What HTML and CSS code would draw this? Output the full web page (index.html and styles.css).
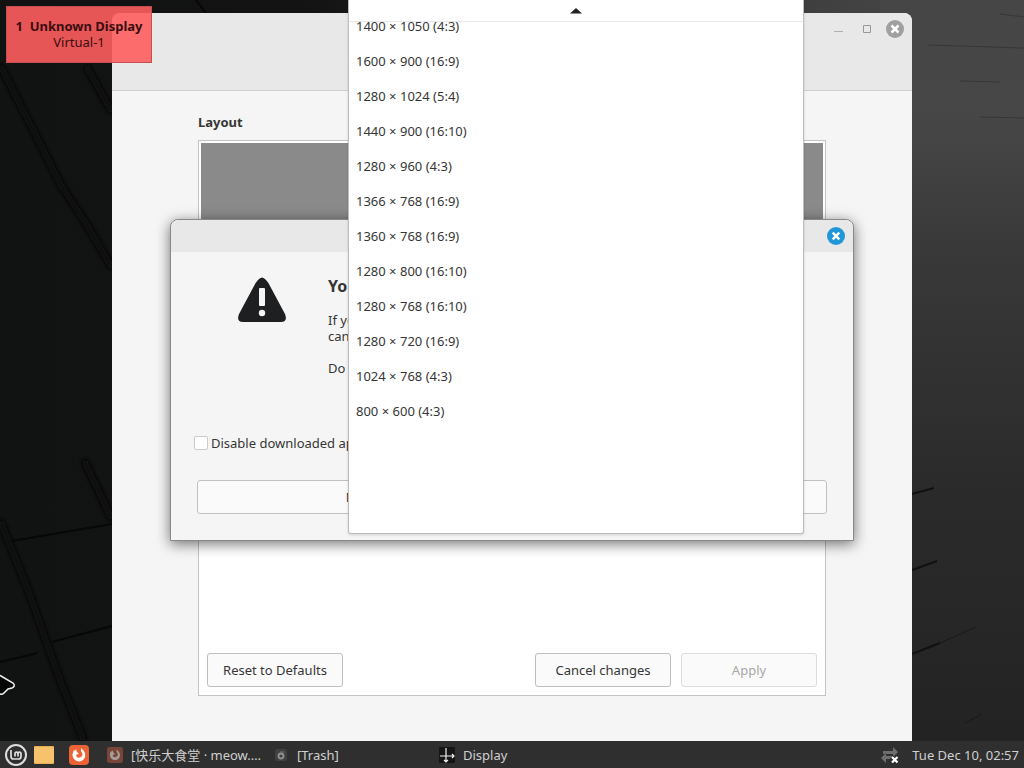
FILE: index.html
```html
<!DOCTYPE html>
<html lang="en">
<head>
    <meta charset="UTF-8">
    <meta name="viewport" content="width=device-width, initial-scale=1.0">
    <title>Display</title>
    <link rel="stylesheet" href="styles.css">
</head>
<body>
    <main class="desktop">
        <svg class="wallpaper" viewBox="0 0 1024 741" preserveAspectRatio="none" aria-hidden="true">
            <defs>
                <linearGradient id="sky" x1="0" y1="0" x2="1" y2="0">
                    <stop offset="0" stop-color="#111212"/>
                    <stop offset="0.3" stop-color="#131313"/>
                    <stop offset="0.8" stop-color="#404040"/>
                    <stop offset="1" stop-color="#4a4a4a"/>
                </linearGradient>
                <linearGradient id="side" x1="0" y1="0" x2="0" y2="1">
                    <stop offset="0" stop-color="#464646"/>
                    <stop offset="0.15" stop-color="#474747"/>
                    <stop offset="0.35" stop-color="#383838"/>
                    <stop offset="0.65" stop-color="#2b2b2b"/>
                    <stop offset="1" stop-color="#232323"/>
                </linearGradient>
                <filter id="soft"><feGaussianBlur stdDeviation="2"/></filter>
            </defs>
            <rect width="1024" height="741" fill="url(#sky)"/>
            <rect x="880" width="144" height="741" fill="url(#side)"/>
            <g fill="none" stroke="#070707" stroke-width="7" filter="url(#soft)">
                <path d="M0 65L28 120L62 187L84 220L112 268"/>
                <path d="M86 66L112 112"/>
                <path d="M84 460L112 520"/>
                <path d="M0 520L28 590L60 680L84 741"/>
            </g>
            <g fill="none" stroke="#070707" stroke-width="2">
                <path d="M12 541L112 524M52 642L112 626M0 662L38 653M196 0L206 13"/>
            </g>
            <g fill="none" stroke="#111" stroke-width="2">
                <path d="M912 494L934 488M912 570L937 561M912 654L940 643"/>
            </g>
            <g fill="none" stroke="#1a1a1a" stroke-width="1">
                <path d="M940 643L976 627M965 723L982 714"/>
            </g>
            <g fill="none" stroke="#363636" stroke-width="1">
                <path d="M928 45L1024 48M980 117L1024 118M960 81L1000 82M1000 14L1024 17"/>
            </g>
        </svg>

        <section class="window" aria-label="Display">
            <header class="window-header">
                <button class="icon-btn" aria-label="Minimize">
                    <svg width="18" height="18" viewBox="0 0 18 18"><path d="M4 11.500h9" stroke="#b0b0b0"/></svg>
                </button>
                <button class="icon-btn" aria-label="Maximize">
                    <svg width="18" height="18" viewBox="0 0 18 18"><path d="M5.500 5.500h7v7h-7z" fill="none" stroke="#999"/></svg>
                </button>
                <button class="icon-btn" aria-label="Close window">
                    <svg width="18" height="18" viewBox="0 0 18 18"><circle cx="9" cy="9" r="9" fill="#a0a0a0"/><path d="M5.500 5.500l7 7M12.500 5.500l-7 7" stroke="#fff" stroke-width="2.500"/></svg>
                </button>
            </header>
            <div class="window-body">
                <h2 class="section-title">Layout</h2>
                <div class="frame">
                    <div class="preview"></div>
                    <div class="actions">
                        <button class="btn btn-reset">Reset to Defaults</button>
                        <button class="btn">Cancel changes</button>
                        <button class="btn" disabled>Apply</button>
                    </div>
                </div>
            </div>
        </section>

        <section class="dialog" role="dialog" aria-label="Question">
            <header class="dialog-header">
                <button class="icon-btn" aria-label="Close dialog">
                    <svg width="18" height="18" viewBox="0 0 18 18"><circle cx="9" cy="9" r="9" fill="#2197d8"/><path d="M5.700 5.700l6.600 6.600M12.300 5.700l-6.600 6.600" stroke="#fff" stroke-width="2.400"/></svg>
                </button>
            </header>
            <div class="dialog-body">
                <div class="message">
                    <svg class="warning" width="50" height="46" viewBox="0 0 50 46" aria-hidden="true">
                        <path d="M21 4Q25-1 29 4Q31 6 33 10L48 38Q51 46 44 46H6Q-1 46 2 38L17 10Q19 6 21 4Z" fill="#1e1f20"/>
                        <rect x="22" y="12" width="6" height="18" rx="1" fill="#f5f5f5"/>
                        <circle cx="25" cy="37" r="3.200" fill="#f5f5f5"/>
                    </svg>
                    <div class="message-text">
                        <h3>You</h3>
                        <p>If you<br>can</p>
                        <p>Do</p>
                    </div>
                </div>
                <label class="check"><input type="checkbox"> Disable downloaded app</label>
                <div class="choices">
                    <button class="btn">No</button>
                    <button class="btn">Yes</button>
                </div>
            </div>
        </section>

        <div class="menu">
            <button class="scroll-up" aria-label="Scroll up">
                <svg width="12" height="6" viewBox="0 0 12 6"><path d="M0 5.500L6 0L12 5.500Z" fill="#222"/></svg>
            </button>
            <div class="menu-view">
                <ul class="menu-list">
                    <li><button>1400 × 1050 (4:3)</button></li>
                    <li><button>1600 × 900 (16:9)</button></li>
                    <li><button>1280 × 1024 (5:4)</button></li>
                    <li><button>1440 × 900 (16:10)</button></li>
                    <li><button>1280 × 960 (4:3)</button></li>
                    <li><button>1366 × 768 (16:9)</button></li>
                    <li><button>1360 × 768 (16:9)</button></li>
                    <li><button>1280 × 800 (16:10)</button></li>
                    <li><button>1280 × 768 (16:10)</button></li>
                    <li><button>1280 × 720 (16:9)</button></li>
                    <li><button>1024 × 768 (4:3)</button></li>
                    <li><button>800 × 600 (4:3)</button></li>
                </ul>
            </div>
        </div>

        <div class="monitor-label">
            <strong>1&nbsp; Unknown Display</strong>
            <div>Virtual-1</div>
        </div>

        <svg class="cursor" width="17" height="24" viewBox="0 0 17 24" aria-hidden="true">
            <path d="M-3 1L1 3L13 10Q16 13 12 15L8 16L4 20Q2 22 0 21L-3 19Z" fill="#050505" stroke="#eee" stroke-width="1.500"/>
        </svg>
    </main>

    <footer class="panel">
        <div class="launchers">
            <button class="icon-btn" aria-label="Menu">
                <svg width="22" height="22" viewBox="0 0 22 22" fill="none" stroke="#dedede"><circle cx="11" cy="11" r="10" stroke-width="2"/><path d="M6 6v6.500q0 2.500 2.500 2.500h5q2.500 0 2.500-2.500V10q0-1.800-1.500-1.800T13 10v2.500M13 10q0-1.800-1.500-1.800T10 10v2.500" stroke-width="1.700"/></svg>
            </button>
            <button class="icon-btn" aria-label="Files">
                <svg width="20" height="18" viewBox="0 0 20 18"><rect width="20" height="18" rx="1" fill="#e5ae55"/><rect y="1" width="20" height="16" rx="1" fill="#f6c26b"/></svg>
            </button>
            <button class="icon-btn launcher-web" aria-label="Firefox">
                <svg width="20" height="20" viewBox="0 0 20 20"><rect width="20" height="20" rx="4" fill="#ee6336"/><path d="M5 5Q2 10 5 14Q10 19 15 14Q18 9 14 5L12 3L12 6Q15 10 12 12Q9 14 7 11Q7 9 10 9L8 7L7 4L6 6Z" fill="#fff"/></svg>
            </button>
        </div>
        <div class="tasks">
            <button class="task">
                <svg width="16" height="16" viewBox="0 0 20 20"><rect width="20" height="20" rx="3" fill="#794536"/><path d="M5 5Q2 10 5 14Q10 19 15 14Q18 9 14 5L12 3L12 6Q15 10 12 12Q9 14 7 11Q7 9 10 9L8 7L7 4L6 6Z" fill="#a59b98"/></svg>
                <span>[快乐大食堂 · meow.…</span>
            </button>
            <button class="task">
                <svg width="16" height="16" viewBox="0 0 16 16"><rect x="2" y="2" width="12" height="12" rx="2" fill="#404040"/><circle cx="8" cy="9" r="2.500" fill="none" stroke="#909090" stroke-width="1.800"/><path d="M7 5h4" stroke="#777"/></svg>
                <span>[Trash]</span>
            </button>
            <button class="task">
                <svg width="16" height="16" viewBox="0 0 16 16"><rect width="16" height="16" rx="1" fill="#151515"/><path d="M7 1v14M1 9h14M5 13l2 2 2-2M13 7l2 2-2 2" fill="none" stroke="#f1f1f1" stroke-width="1.200"/></svg>
                <span>Display</span>
            </button>
        </div>
        <svg class="network" width="20" height="20" viewBox="0 0 20 20" aria-label="Network disconnected">
            <path d="M3 6h10V2l5 5-5 5V9H3zM15 11H6V8l-5 5 5 5v-4h9z" fill="#6f6f6f"/>
            <path d="M11.500 12l6 6M17.500 12l-6 6" stroke="#2f2f2f" stroke-width="5"/>
            <path d="M12 12l5.500 5.500M17.500 12l-5.500 5.500" stroke="#fff" stroke-width="2.200"/>
        </svg>
        <time>Tue Dec 10, 02:57</time>
    </footer>
</body>
</html>
```
FILE: styles.css
```css
* {
    box-sizing: border-box;
}
body {
    margin: 0;
    height: 100vh;
    display: flex;
    flex-direction: column;
    overflow: hidden;
    background-color: #111;
    color: #363636;
    font-family: "Noto Sans", "Noto Sans CJK SC", sans-serif;
    font-size: 13px;
    line-height: 16px;
}
button {
    font: inherit;
    color: inherit;
    padding: 0;
    border: none;
    background: none;
    white-space: nowrap;
}
h2, h3, p, ul {
    margin: 0;
    padding: 0;
}
svg {
    display: block;
    flex-shrink: 0;
}

/* desktop and its windows */
.desktop {
    position: relative;
    flex: 1;
    min-height: 0;
    overflow: hidden;
}
.wallpaper {
    position: absolute;
    width: 100%;
    height: 100%;
}
.window {
    position: absolute;
    left: 112px;
    right: 112px;
    top: 13px;
    bottom: 0;
    display: flex;
    flex-direction: column;
    background-color: #f5f5f5;
    border-radius: 8px 8px 0 0;
    overflow: hidden;
}
.window-header {
    height: 78px;
    display: flex;
    justify-content: flex-end;
    gap: 10px;
    padding: 7px 8px;
    background-color: #e8e8e8;
    border-bottom: 1px solid #cfcfcf;
}
.icon-btn {
    align-self: flex-start;
}
.window-body {
    flex: 1;
    display: flex;
    flex-direction: column;
    padding: 23px 86px 45px;
}
.section-title {
    font-size: 13px;
    line-height: 16px;
    margin-bottom: 10px;
}
.frame {
    flex: 1;
    display: flex;
    flex-direction: column;
    justify-content: space-between;
    padding: 2px;
    background-color: #fff;
    border: 1px solid #c3c3c3;
}
.preview {
    height: 300px;
    background-color: #8a8a8a;
}
.actions {
    display: flex;
    gap: 10px;
    padding: 6px;
}
.btn {
    width: 136px;
    height: 34px;
    border: 1px solid #c0c0c0;
    border-radius: 3px;
    background-color: #fafafa;
}
.btn:disabled {
    color: #a8a8a8;
    border-color: #dcdcdc;
}
.btn-reset {
    margin-right: auto;
}

.dialog {
    position: absolute;
    left: 170px;
    right: 170px;
    top: 219px;
    background-color: #f5f5f5;
    border: 1px solid #888;
    border-radius: 8px 8px 0 0;
    box-shadow: 0 3px 14px rgba(0, 0, 0, 0.55);
}
.dialog-header {
    height: 32px;
    display: flex;
    justify-content: flex-end;
    padding: 7px 8px;
    background-color: #e8e8e8;
    border-radius: 8px 8px 0 0;
}
.dialog-body {
    padding: 24px 26px 26px;
}
.message {
    height: 159px;
    display: flex;
    gap: 41px;
    padding-left: 40px;
}
.message-text h3 {
    font-size: 16px;
    line-height: 20px;
    margin-bottom: 16px;
}
.message-text p {
    margin-bottom: 16px;
}
.check {
    display: flex;
    align-items: center;
    gap: 3px;
    margin-left: -3px;
    margin-bottom: 29px;
}
.check input {
    appearance: none;
    width: 14px;
    height: 14px;
    margin: 0;
    border: 1px solid #cdcdcd;
    border-radius: 2px;
    background-color: #fff;
}
.choices {
    display: flex;
}
.choices .btn {
    flex: 1;
}

.menu {
    position: absolute;
    left: 348px;
    top: 0;
    width: 456px;
    height: 534px;
    display: flex;
    flex-direction: column;
    background-color: #fff;
    border: 1px solid #bdbdbd;
    border-top: none;
    border-radius: 0 0 3px 3px;
    box-shadow: 0 1px 3px rgba(0, 0, 0, 0.15);
}
.scroll-up {
    height: 22px;
    display: flex;
    justify-content: center;
    align-items: center;
    border-bottom: 1px solid #e8e8e8;
}
.menu-view {
    flex: 1;
    display: flex;
    flex-direction: column;
    overflow: hidden;
}
/* scrolled part way down the first entry */
.menu-list {
    margin-top: -14px;
    list-style: none;
}
.menu-list button {
    width: 100%;
    height: 35px;
    padding: 0 7px;
    display: flex;
    align-items: center;
}

.monitor-label {
    position: absolute;
    left: 6px;
    top: 6px;
    width: 146px;
    height: 57px;
    padding-top: 11px;
    text-align: center;
    white-space: nowrap;
    color: #3a0d10;
    background-color: rgba(255, 94, 94, 0.9);
    border: 1px solid #c65050;
}
.cursor {
    position: absolute;
    left: 0;
    top: 673px;
}

/* bottom panel */
.panel {
    height: 27px;
    display: flex;
    align-items: center;
    padding: 0 5px;
    background-color: #2f2f2f;
    color: #d0d0d0;
}
.launchers {
    display: flex;
    gap: 7px;
    width: 84px;
    margin-right: 18px;
}
.launchers .icon-btn {
    align-self: center;
}
.launcher-web {
    margin-left: auto;
}
.tasks {
    flex: 1;
    display: flex;
}
.task {
    width: 166px;
    display: flex;
    align-items: center;
    gap: 8px;
}
.network {
    margin-right: 12px;
}
```
